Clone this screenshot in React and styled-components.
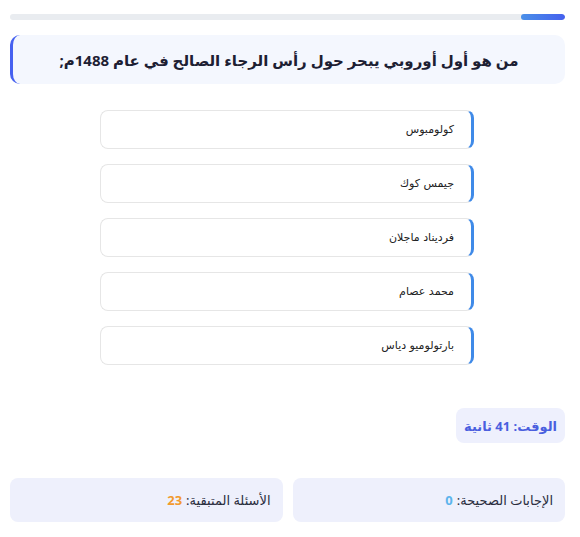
import React from "react";
import styled, { createGlobalStyle } from "styled-components";

const GlobalStyle = createGlobalStyle`
  body {
    margin: 0;
    background: #ffffff;
    font-family: "Noto Sans", "DejaVu Sans", sans-serif;
  }
`;

const options = [
  "كولومبوس",
  "جيمس كوك",
  "فرديناد ماجلان",
  "محمد عصام",
  "بارتولوميو دياس",
];

export default function App() {
  return (
    <>
      <GlobalStyle />
      <Page dir="rtl">
        <Progress>
          <ProgressFill $pct={8} />
        </Progress>
        <Question>من هو أول أوروبي يبحر حول رأس الرجاء الصالح في عام 1488م;</Question>
        <Options>
          {options.map((o) => (
            <Option key={o}>{o}</Option>
          ))}
        </Options>
        <TimerRow>
          <Timer>الوقت: 41 ثانية</Timer>
        </TimerRow>
        <Stats>
          <StatCard>
            الإجابات الصحيحة: <Num $color="#5bb4ec">0</Num>
          </StatCard>
          <StatCard>
            الأسئلة المتبقية: <Num $color="#f29a2e">23</Num>
          </StatCard>
        </Stats>
      </Page>
    </>
  );
}

const Page = styled.div`
  width: 555px;
  margin-left: 10px;
  padding-top: 14px;
  display: flex;
  flex-direction: column;
`;

const Progress = styled.div`
  height: 6px;
  border-radius: 3px;
  background: #e9ecf0;
  overflow: hidden;
  display: flex;
`;

const ProgressFill = styled.div`
  width: ${(p) => p.$pct}%;
  height: 100%;
  border-radius: 3px;
  background: linear-gradient(to right, #4a90e8, #4560ee);
`;

const Question = styled.h2`
  margin: 15px 0 0;
  height: 49px;
  box-sizing: border-box;
  display: flex;
  align-items: center;
  justify-content: center;
  background: #f4f7fe;
  border-left: 3px solid #4661f0;
  border-radius: 10px;
  font-size: 15px;
  font-weight: 700;
  color: #1d2033;
`;

const Options = styled.div`
  margin-top: 26px;
  display: flex;
  flex-direction: column;
  align-items: center;
  gap: 15px;
  padding-right: 1px;
`;

const Option = styled.div`
  width: 374px;
  height: 39px;
  box-sizing: border-box;
  display: flex;
  align-items: center;
  padding-right: 17px;
  background: #ffffff;
  border: 1px solid #e6e6e6;
  border-right: 3px solid #3f8ae8;
  border-radius: 8px;
  font-family: "DejaVu Sans", sans-serif;
  font-size: 11px;
  color: #222222;
`;

const TimerRow = styled.div`
  margin-top: 43px;
  display: flex;
`;

const Timer = styled.div`
  height: 35px;
  padding: 0 8px;
  display: flex;
  align-items: center;
  background: #eef0fd;
  border-radius: 8px;
  font-size: 13px;
  font-weight: 700;
  color: #4a5fdf;
`;

const Stats = styled.div`
  margin-top: 35px;
  display: grid;
  grid-template-columns: 1fr 1fr;
  gap: 10px;
`;

const StatCard = styled.div`
  height: 44px;
  padding: 0 12px;
  display: flex;
  align-items: center;
  gap: 4px;
  background: #eef0fc;
  border-radius: 8px;
  font-size: 13px;
  color: #2a2d3e;
`;

const Num = styled.span`
  font-weight: 700;
  color: ${(p) => p.$color};
`;
